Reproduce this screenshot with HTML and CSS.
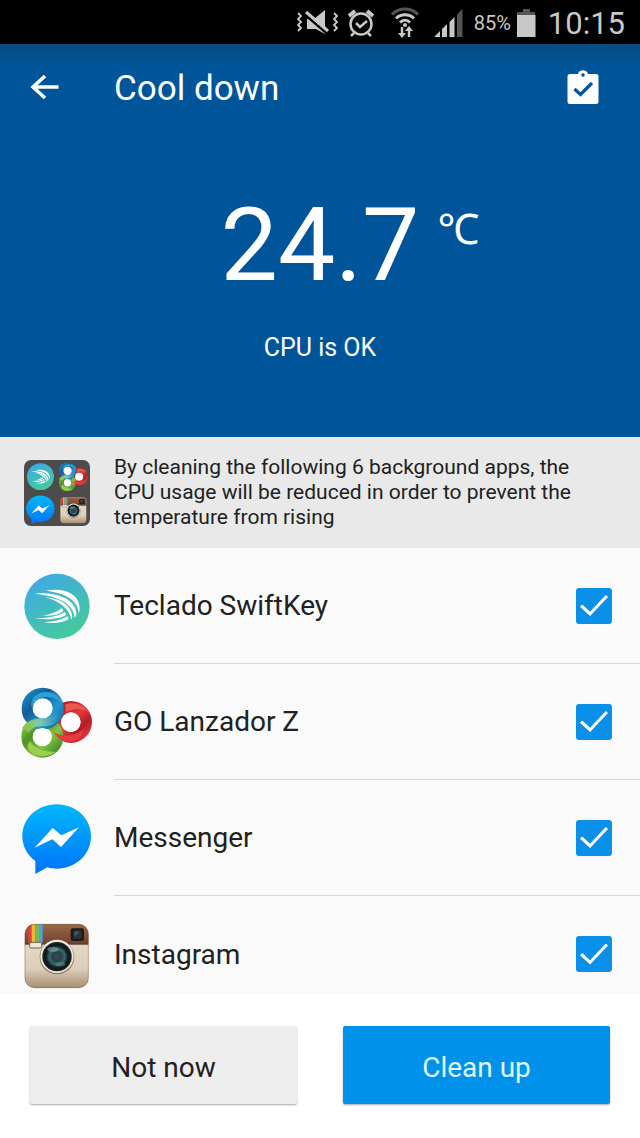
FILE: index.html
```html
<!DOCTYPE html>
<html lang="en">
<head>
  <meta charset="UTF-8">
  <meta name="viewport" content="width=device-width, initial-scale=1">
  <title>Cool down</title>
  <link rel="stylesheet" href="styles.css">
</head>
<body>

  <!-- app icons, used in the list and in the folder preview -->
  <svg class="sprites" aria-hidden="true">
    <defs>
      <linearGradient id="swift-bg" x1="0.2" y1="0" x2="0.7" y2="1">
        <stop offset="0" stop-color="#3fa9e6"/>
        <stop offset="1" stop-color="#45cb9a"/>
      </linearGradient>
      <linearGradient id="go-blue" x1="0" y1="0" x2="1" y2="1">
        <stop offset="0" stop-color="#1587c4"/>
        <stop offset="0.3" stop-color="#155a96"/>
        <stop offset="0.7" stop-color="#2496d0"/>
        <stop offset="1" stop-color="#0f6fae"/>
      </linearGradient>
      <linearGradient id="go-red" x1="0" y1="0" x2="1" y2="1">
        <stop offset="0" stop-color="#a81c24"/>
        <stop offset="0.5" stop-color="#e23a3c"/>
        <stop offset="0.75" stop-color="#b41d26"/>
        <stop offset="1" stop-color="#e0393d"/>
      </linearGradient>
      <linearGradient id="go-green" x1="0" y1="0" x2="1" y2="1">
        <stop offset="0" stop-color="#8fc63c"/>
        <stop offset="0.3" stop-color="#4d8f2b"/>
        <stop offset="0.65" stop-color="#86c440"/>
        <stop offset="1" stop-color="#3f8a2c"/>
      </linearGradient>
      <linearGradient id="go-twist" x1="0" y1="0" x2="1" y2="0">
        <stop offset="0" stop-color="#8cc63f"/>
        <stop offset="0.45" stop-color="#7fc6b4"/>
        <stop offset="1" stop-color="#1c86c4"/>
      </linearGradient>
      <linearGradient id="msg-bg" x1="0" y1="0" x2="0" y2="1">
        <stop offset="0" stop-color="#00b8fc"/>
        <stop offset="1" stop-color="#0073fb"/>
      </linearGradient>
      <linearGradient id="insta-body" x1="0" y1="0" x2="0" y2="1">
        <stop offset="0" stop-color="#e9dfd0"/>
        <stop offset="0.7" stop-color="#dccfbb"/>
        <stop offset="1" stop-color="#a88d6f"/>
      </linearGradient>
      <linearGradient id="insta-top" x1="0" y1="0" x2="0" y2="1">
        <stop offset="0" stop-color="#9a6a4c"/>
        <stop offset="1" stop-color="#6f412b"/>
      </linearGradient>
      <radialGradient id="insta-lens">
        <stop offset="0" stop-color="#4b4654"/>
        <stop offset="0.35" stop-color="#24434a"/>
        <stop offset="0.6" stop-color="#3a6b6c"/>
        <stop offset="0.8" stop-color="#16262b"/>
        <stop offset="1" stop-color="#0d1215"/>
      </radialGradient>
      <clipPath id="insta-clip">
        <rect x="44" y="45" width="192" height="192" rx="30"/>
      </clipPath>
    </defs>

    <symbol id="icon-swiftkey" viewBox="21 15 240 240">
      <circle cx="141" cy="136" r="98" fill="url(#swift-bg)"/>
      <g fill="#fff">
        <path d="M108 89 C150 80 208 92 209 142 C209 148 208 152 206 156 C204 120 170 96 108 89Z"/>
        <path d="M74 98 C130 92 196 110 199 156 C199 162 197 167 194 170 C190 126 146 106 74 98Z"/>
        <path d="M106 109 C150 112 184 132 187 166 C187 170 186 173 184 176 C178 144 152 122 106 109Z"/>
        <path d="M98 164 C122 160 142 153 156 141 L160 150 C146 162 124 166 98 164Z"/>
        <path d="M74 171 C112 172 144 166 164 153 L169 161 C150 174 108 178 74 171Z"/>
        <path d="M100 183 C128 184 152 179 172 166 L176 175 C154 187 128 189 100 183Z"/>
      </g>
    </symbol>

    <symbol id="icon-golauncher" viewBox="21 15 240 240">
      <g fill="none" stroke-width="34">
        <circle cx="183" cy="135" r="46" stroke="url(#go-red)"/>
        <circle cx="97" cy="179" r="46" stroke="url(#go-green)"/>
        <circle cx="98" cy="95" r="46" stroke="url(#go-blue)"/>
        <path d="M46 160 C66 130 88 138 112 135 C132 132 143 118 148 102" stroke="url(#go-twist)" stroke-width="24"/>
      </g>
      <path d="M130 164 C150 180 190 180 222 158 C216 186 188 200 160 192 C150 188 138 178 130 164Z" fill="#e63c40"/>
      <path d="M60 193 C50 208 52 218 64 226 C84 242 118 240 138 224 C104 226 72 216 60 193Z" fill="#9bd04c"/>
      <path d="M66 93 C58 70 76 48 100 46 C128 42 150 56 160 82 C140 62 112 54 90 64 C76 70 68 80 66 93Z" fill="#2ba0d6"/>
      <path d="M166 82 C186 74 220 80 236 106 C216 92 190 94 168 106Z" fill="#ee5650"/>
      <circle cx="98" cy="94" r="30" fill="#fff"/>
      <circle cx="182" cy="136" r="29" fill="#fff"/>
      <circle cx="97" cy="180" r="27" fill="#fff"/>
    </symbol>

    <symbol id="icon-messenger" viewBox="21 15 240 240">
      <path d="M140 34 C82 34 37 76 37 130 C37 160 52 187 76 204 L76 243 L112 223 C121 226 130 227 140 227 C198 227 243 184 243 130 C243 76 198 34 140 34Z" fill="url(#msg-bg)"/>
      <path d="M74 164 L128 105 L154 127 L207 103 L153 162 L127 139Z" fill="#fff"/>
    </symbol>

    <symbol id="icon-instagram" viewBox="21 15 240 240">
      <g clip-path="url(#insta-clip)">
        <rect x="44" y="45" width="192" height="192" fill="url(#insta-body)"/>
        <rect x="44" y="45" width="192" height="60" fill="url(#insta-top)"/>
        <rect x="54" y="45" width="11" height="56" fill="#d8413c"/>
        <rect x="65" y="45" width="11" height="56" fill="#f2b63c"/>
        <rect x="76" y="45" width="11" height="56" fill="#78b955"/>
        <rect x="87" y="45" width="11" height="56" fill="#4ba3dc"/>
        <rect x="44" y="104" width="192" height="3" fill="#54301f"/>
      </g>
      <rect x="59" y="100" width="36" height="17" rx="4" fill="#efe8dc" stroke="#75604e" stroke-width="3"/>
      <rect x="182" y="58" width="40" height="38" rx="7" fill="#1e1816"/>
      <rect x="190" y="64" width="25" height="26" rx="5" fill="#26343d"/>
      <path d="M194 68 h14 l-14 14Z" fill="#48616e"/>
      <circle cx="141" cy="144" r="52" fill="#8c7a66"/>
      <circle cx="141" cy="142" r="50" fill="#eee7dc"/>
      <circle cx="141" cy="143" r="44" fill="#191f22"/>
      <circle cx="141" cy="143" r="39" fill="url(#insta-lens)"/>
      <ellipse cx="129" cy="121" rx="17" ry="8" fill="#8fb9b4" opacity="0.5"/>
      <ellipse cx="151" cy="166" rx="15" ry="6" fill="#5d9a94" opacity="0.5"/>
      <rect x="45" y="46" width="190" height="190" rx="29" fill="none" stroke="#7a5a42" stroke-width="2" opacity="0.7"/>
    </symbol>
  </svg>

  <div class="screen">
    <div class="status-bar">
      <svg class="status-icon" width="42" height="28" viewBox="0 0 42 28">
        <path d="M10 10h7l11-9v24l-9-5h-9z" fill="#c8c8c8"/>
        <path d="M9 6l22 19" stroke="#000" stroke-width="3"/>
        <path d="M9 3l22 19" stroke="#c8c8c8" stroke-width="3"/>
        <path d="M1 4l3 3-3 3 3 3-3 3 3 3-3 3M37 4l3 3-3 3 3 3-3 3 3 3-3 3" fill="none" stroke="#c8c8c8" stroke-width="1.800"/>
      </svg>
      <svg class="status-icon alarm" width="28" height="28" viewBox="0 0 28 28" fill="none" stroke="#c8c8c8">
        <circle cx="14" cy="15" r="10.500" stroke-width="2.500"/>
        <path d="M9 14l4 4 7-6" stroke-width="2.500"/>
        <path d="M2 7l6-5M26 7l-6-5" stroke-width="4"/>
        <path d="M7 24l-3 3M21 24l3 3" stroke-width="2.500"/>
      </svg>
      <svg class="status-icon wifi" width="28" height="32" viewBox="0 0 28 32" fill="none" stroke="#c8c8c8" stroke-width="3">
        <path d="M1 7.500C8 0 20 0 27 7.500" stroke="#555"/>
        <path d="M5 11.500C10 6.500 18 6.500 23 11.500M9 15.500C12 12.500 16 12.500 19 15.500"/>
        <circle cx="14" cy="18" r="2" fill="#c8c8c8" stroke="none"/>
        <path d="M11 20v8M18 22v8" stroke-width="2.500"/>
        <path d="M7 26h8l-4 5zM14 24h8l-4-5z" fill="#c8c8c8" stroke="none"/>
      </svg>
      <svg class="status-icon signal" width="30" height="28" viewBox="0 0 30 28" fill="#c8c8c8">
        <path d="M0 28l6-6v6zM8 20l5-5v13H8zM15.500 13l5-5v20h-5z"/>
        <path d="M23 5.500L28.500 0v28H23z" fill="#555"/>
      </svg>
      <span class="battery-level">85%</span>
      <svg class="status-icon battery" width="19" height="28" viewBox="0 0 19 28">
        <path d="M6 0h7v3h5v3H0V3h6z" fill="#555"/>
        <path d="M0 6h18.500v22H0z" fill="#c8c8c8"/>
      </svg>
      <span class="clock">10:15</span>
    </div>

    <header class="hero">
      <div class="toolbar">
        <button class="icon-button" aria-label="Back">
          <svg width="30" height="30" viewBox="0 0 30 30" fill="none" stroke="#fff" stroke-width="3.500">
            <path d="M29.500 14H5M16 3L4 14l12 11"/>
          </svg>
        </button>
        <h1>Cool down</h1>
        <button class="icon-button" aria-label="Task list">
          <svg width="32" height="36" viewBox="0 0 32 36">
            <path d="M3 4h8c1-5 9-5 10 0h8q2.500 0 2.500 2.500v25q0 2.500-2.500 2.500H3Q.5 34 .5 31.500v-25Q.5 4 3 4z" fill="#fff"/>
            <circle cx="16" cy="5" r="1.800" fill="#005499"/>
            <path d="M7.500 19l6 5.500L25 13" fill="none" stroke="#005499" stroke-width="3.200"/>
          </svg>
        </button>
      </div>
      <div class="temperature">
        <span class="degrees">24.7</span>
        <span class="unit">℃</span>
      </div>
      <p class="cpu-status">CPU is OK</p>
    </header>

    <section class="notice">
      <div class="folder">
        <svg><use href="#icon-swiftkey"/></svg>
        <svg><use href="#icon-golauncher"/></svg>
        <svg><use href="#icon-messenger"/></svg>
        <svg><use href="#icon-instagram"/></svg>
      </div>
      <p>By cleaning the following 6 background apps, the CPU usage will be reduced in order to prevent the temperature from rising</p>
    </section>

    <ul class="apps">
      <li class="app">
        <svg class="app-icon"><use href="#icon-swiftkey"/></svg>
        <div class="app-row">
          <label for="swiftkey">Teclado SwiftKey</label>
          <input type="checkbox" id="swiftkey" checked>
        </div>
      </li>
      <li class="app">
        <svg class="app-icon"><use href="#icon-golauncher"/></svg>
        <div class="app-row">
          <label for="golauncher">GO Lanzador Z</label>
          <input type="checkbox" id="golauncher" checked>
        </div>
      </li>
      <li class="app">
        <svg class="app-icon"><use href="#icon-messenger"/></svg>
        <div class="app-row">
          <label for="messenger">Messenger</label>
          <input type="checkbox" id="messenger" checked>
        </div>
      </li>
      <li class="app">
        <svg class="app-icon"><use href="#icon-instagram"/></svg>
        <div class="app-row">
          <label for="instagram">Instagram</label>
          <input type="checkbox" id="instagram" checked>
        </div>
      </li>
    </ul>

    <footer class="actions">
      <button class="btn">Not now</button>
      <button class="btn btn-primary">Clean up</button>
    </footer>
  </div>

</body>
</html>
```
FILE: styles.css
```css
* {
  box-sizing: border-box;
}

body {
  margin: 0;
  font-family: Roboto, sans-serif;
  color: #212121;
  background: #fff;
}

h1, p, ul {
  margin: 0;
  padding: 0;
}

button {
  font-family: inherit;
  border: none;
  cursor: pointer;
}

.sprites {
  position: absolute;
  width: 0;
  height: 0;
}

.screen {
  display: flex;
  flex-direction: column;
  height: 100vh;
}

/* status bar */
.status-bar {
  display: flex;
  flex-shrink: 0;
  align-items: center;
  justify-content: flex-end;
  height: 44px;
  padding: 2px 15px 0 0;
  background: #000;
  color: #c8c8c8;
}

.status-icon {
  flex-shrink: 0;
}

.alarm {
  margin-left: 8px;
}

.wifi {
  margin-left: 16px;
}

.signal {
  margin-left: 15px;
}

.battery-level {
  margin: 0 6px 0 10px;
  font-size: 20px;
}

.clock {
  margin-left: 12px;
  font-size: 31px;
}

/* blue header */
.hero {
  flex-shrink: 0;
  padding-bottom: 74px;
  background: linear-gradient(#0b4a80, #005499 20px);
  color: #fff;
}

.toolbar {
  display: flex;
  align-items: center;
  height: 88px;
  padding: 0 41px 0 29px;
}

.toolbar h1 {
  flex: 1;
  margin-left: 55px;
  font-size: 35px;
  font-weight: 400;
}

.icon-button {
  display: flex;
  padding: 0;
  background: none;
}

.temperature {
  display: grid;
  grid-template-columns: 1fr auto 1fr;
  margin-top: 53px;
}

.degrees {
  grid-column: 2;
  font-size: 102px;
  line-height: 120px;
}

.unit {
  padding: 14px 0 0 18px;
  font-family: "Noto Sans", "Noto Sans CJK SC", sans-serif;
  font-size: 42px;
  line-height: 58px;
}

.cpu-status {
  margin-top: 28px;
  font-size: 25px;
  line-height: 30px;
  text-align: center;
}

/* explanation */
.notice {
  display: flex;
  flex-shrink: 0;
  align-items: center;
  gap: 24px;
  padding: 18px 40px 18px 24px;
  background: #e9e9e9;
}

.notice p {
  font-size: 21px;
  line-height: 25px;
}

.folder {
  display: grid;
  flex-shrink: 0;
  grid-template-columns: 33px 33px;
  border-radius: 7px;
  background: #4c4c4c;
}

.folder svg {
  width: 33px;
  height: 33px;
}

/* app list */
.apps {
  flex: 1;
  min-height: 0;
  overflow-y: auto;
  scrollbar-width: none;
  list-style: none;
  background: #fafafa;
}

.app {
  display: flex;
  align-items: center;
}

.app-icon {
  flex-shrink: 0;
  width: 80px;
  height: 80px;
  margin: 0 17px;
}

.app-row {
  display: flex;
  flex: 1;
  align-items: center;
  justify-content: space-between;
  height: 116px;
  padding-right: 28px;
  border-bottom: 1px solid #d8d8d8;
}

.app:last-child .app-row {
  border-bottom: none;
}

.app-row label {
  font-size: 28px;
}

.app-row input {
  appearance: none;
  display: grid;
  place-items: center;
  width: 36px;
  height: 36px;
  margin: 0;
  border: 2px solid #757575;
  border-radius: 3px;
}

.app-row input:checked {
  border-color: #0a90e8;
  background: #0a90e8;
}

.app-row input:checked::before {
  content: "";
  width: 28px;
  height: 21px;
  background: #fff;
  clip-path: polygon(0 56%, 8% 45%, 36% 80%, 92% 0, 100% 10%, 36% 100%);
}

/* bottom buttons */
.actions {
  display: flex;
  flex-shrink: 0;
  gap: 46px;
  padding: 31px 30px 34px;
  background: #fff;
}

.btn {
  flex: 1;
  height: 78px;
  padding-top: 6px;
  border-radius: 2px;
  background: #eee;
  box-shadow: 0 1px 2px rgba(0, 0, 0, 0.35);
  color: #212121;
  font-size: 28px;
}

.btn-primary {
  background: #0091ea;
  color: #e1f5fe;
}
```
